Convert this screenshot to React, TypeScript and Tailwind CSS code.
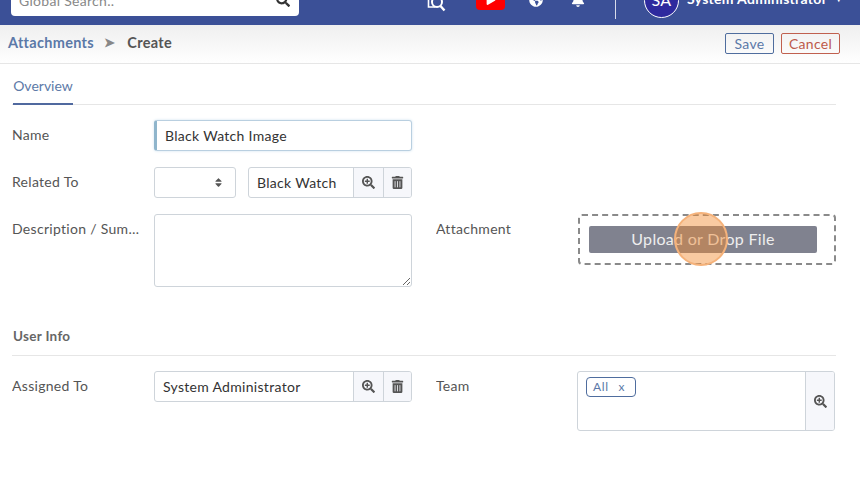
import { FaBell, FaGlobeAmericas, FaPlay, FaSearch, FaSearchPlus, FaSort, FaTrashAlt } from "react-icons/fa"

function ReportIcon() {
  return (
    <svg viewBox="0 0 19 24" className="h-6 w-[19px]" fill="none" stroke="white">
      <path d="M1.5 4v15h7" strokeWidth="1.6" />
      <circle cx="10" cy="14" r="5" strokeWidth="2" />
      <path d="M13.5 18l4 4.5" strokeWidth="2.4" />
    </svg>
  )
}

function LookupButtons({ trash = true }: { trash?: boolean }) {
  return (
    <>
      <div className={`flex items-center justify-center border-l border-[#ced4da] bg-[#f6f7fb] text-[#555] ${trash ? "w-[30px]" : "w-[29px]"}`}>
        <FaSearchPlus className="text-[13px]" />
      </div>
      {trash && (
        <div className="flex w-[28px] items-center justify-center border-l border-[#ced4da] bg-[#f6f7fb] text-[#555]">
          <FaTrashAlt className="text-[13px]" />
        </div>
      )}
    </>
  )
}

function Label({ children }: { children: string }) {
  return <div className="w-[142px] shrink-0 truncate pr-[8px] pb-[2px] text-[#555]">{children}</div>
}

export default function App() {
  return (
    <div className="h-[479px] w-[860px] overflow-hidden bg-white font-['Lato',sans-serif] text-[14px] tracking-[0.3px] text-[#444]">
      <header className="h-[25px] overflow-hidden bg-[#3b5097]">
        <div className="-mt-[25px] flex h-[50px] items-center">
          <div className="ml-[11px] flex h-8 w-[288px] items-center justify-between rounded bg-white pr-[9px] pl-[8px] text-[#888]">
            <span>Global Search..</span>
            <FaSearch className="text-[14px] text-[#333]" />
          </div>
          <div className="ml-[128px]">
            <ReportIcon />
          </div>
          <div className="ml-[30px] flex h-5 w-[29px] items-center justify-center rounded bg-[#f00] text-white">
            <FaPlay className="text-[10px]" />
          </div>
          <FaGlobeAmericas className="ml-[24px] text-[14px] text-white" />
          <FaBell className="ml-[28px] text-[14px] text-white" />
          <div className="ml-[30px] h-[38px] w-px bg-white/80" />
          <div className="ml-[28px] flex h-[35px] w-[35px] items-center justify-center rounded-full border border-white bg-[#2e2a9e] text-[16px] text-white">
            SA
          </div>
          <div className="ml-[8px] flex items-center gap-[7px] pb-[3px] text-[14px] font-bold whitespace-nowrap text-white">
            System Administrator
            <span className="text-[9px]">▼</span>
          </div>
        </div>
      </header>

      <div className="flex h-[39px] items-center justify-between border-b border-[#e6e6e6] bg-gradient-to-b from-[#efefef] to-white pr-[20px] pl-2">
        <div className="flex items-center pb-[3px] text-[14.5px] font-bold">
          <span className="text-[#5b79a8]">Attachments</span>
          <span className="ml-[10px] text-[13px] text-[#888]">➤</span>
          <span className="ml-[12px] text-[#555]">Create</span>
        </div>
        <div className="flex gap-[7px] pb-[2px]">
          <button className="flex h-[21px] w-[49px] items-center justify-center rounded-[2px] border border-[#4f6d9e] text-[#5b79a8]">
            Save
          </button>
          <button className="flex h-[21px] w-[59px] items-center justify-center rounded-[2px] border border-[#c0604f] text-[#bd5a4a]">
            Cancel
          </button>
        </div>
      </div>

      <main className="pr-6 pl-3">
        <div className="border-b border-[#e6e6e6]">
          <div className="mt-[11px] ml-px -mb-px w-[60px] border-b-2 border-[#50699f] pb-[6px] text-center leading-[22px] tracking-normal text-[#5d7aa8]">
            Overview
          </div>
        </div>

        <div className="mt-[15px] grid grid-cols-[400px_400px] gap-x-6">
          <div className="flex flex-col gap-4">
            <div className="flex items-center">
              <Label>Name</Label>
              <div className="flex h-[31px] w-[258px] items-center rounded-[3px] border border-l-[3px] border-[#b9cfe0] border-l-[#8fb5cc] pl-[8px] text-[#333] shadow-[0_0_3px_#cfe2f0]">
                Black Watch Image
              </div>
            </div>
            <div className="flex items-center">
              <Label>Related To</Label>
              <div className="flex h-[31px] w-[82px] items-center justify-end rounded-[3px] border border-[#ced4da] pr-[11px] text-[#555]">
                <FaSort className="text-[11px]" />
              </div>
              <div className="ml-3 flex h-[31px] w-[164px] overflow-hidden rounded-[3px] border border-[#ced4da]">
                <div className="flex flex-1 items-center pl-2 text-[#333]">Black Watch</div>
                <LookupButtons />
              </div>
            </div>
            <div className="flex items-start">
              <div className="mt-[4px]">
                <Label>Description / Summary</Label>
              </div>
              <textarea className="h-[73px] w-[258px] rounded-[3px] border border-[#ced4da]" />
            </div>
          </div>

          <div className="flex items-start pt-[94px]">
            <div className="mt-[4px]">
              <Label>Attachment</Label>
            </div>
            <div className="relative flex h-[51px] w-[258px] items-center rounded-[4px] border-2 border-dashed border-[#8a8a8a] pl-[9px]">
              <div className="flex h-[27px] w-[228px] items-center justify-center rounded-[2px] bg-[#80828f] pb-[2px] text-[16px] text-[#eee]">
                Upload or Drop File
              </div>
              <div className="absolute top-[-4px] left-[94px] h-[54px] w-[54px] rounded-full border-2 border-[#f5b27a] bg-[#f28a2e]/45" />
            </div>
          </div>
        </div>

        <div className="mt-[39px] border-b border-[#e6e6e6] pb-[9px] leading-[19px] font-bold text-[#666]">
          <span className="ml-px text-[13.5px]">User Info</span>
        </div>

        <div className="mt-[15px] grid grid-cols-[400px_400px] gap-x-6">
          <div className="flex items-center self-start">
            <Label>Assigned To</Label>
            <div className="flex h-[31px] w-[258px] overflow-hidden rounded-[3px] border border-[#ced4da]">
              <div className="flex flex-1 items-center pl-2 text-[#333]">System Administrator</div>
              <LookupButtons />
            </div>
          </div>
          <div className="flex items-start">
            <div className="mt-[4px] w-[141px]">
              <Label>Team</Label>
            </div>
            <div className="flex h-[60px] w-[258px] overflow-hidden rounded-[3px] border border-[#ced4da]">
              <div className="flex-1 pt-[5px] pl-2">
                <div className="flex h-5 w-[50px] items-center gap-[10px] rounded-[4px] border border-[#4f6d9e] pl-[6px] text-[12px] tracking-wider text-[#5b79a8]">
                  <span>All</span>
                  <span>x</span>
                </div>
              </div>
              <LookupButtons trash={false} />
            </div>
          </div>
        </div>
      </main>
    </div>
  )
}
